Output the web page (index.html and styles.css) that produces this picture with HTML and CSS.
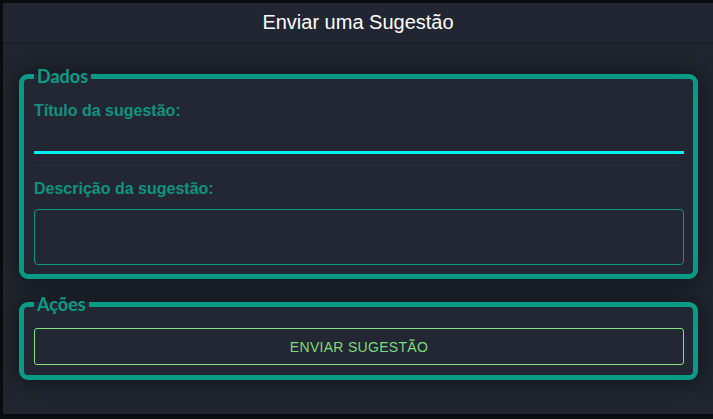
FILE: index.html
```html
<!DOCTYPE html>
<html lang="pt">
<head>
<meta charset="utf-8">
<title>Enviar uma Sugestão</title>
<link rel="stylesheet" href="styles.css">
</head>
<body>
<div class="dialog">
  <header class="dialog-title">Enviar uma Sugestão</header>
  <div class="dialog-body">
    <fieldset class="group">
      <legend>Dados</legend>
      <label class="field-label" for="titulo">Título da sugestão:</label>
      <div class="text-field">
        <input id="titulo" class="text-input" type="text">
      </div>
      <div class="field-details"></div>
      <label class="field-label second" for="descricao">Descrição da sugestão:</label>
      <textarea id="descricao" class="text-area"></textarea>
    </fieldset>
    <fieldset class="group actions">
      <legend>Ações</legend>
      <button class="send-btn" type="button">Enviar Sugestão</button>
    </fieldset>
  </div>
</div>
</body>
</html>
```
FILE: styles.css
```css
html, body {
  margin: 0;
  padding: 0;
  background: #0b0c0f;
  height: 100%;
  overflow: hidden;
}

.dialog {
  margin: 3px 0 0 3px;
  width: 710px;
  height: 411px;
  background: #20252f;
  border-top-left-radius: 3px;
  font-family: "Liberation Sans", Arial, sans-serif;
  display: flex;
  flex-direction: column;
}

.dialog-title {
  height: 39px;
  border-bottom: 2px solid #1a1e26;
  color: #ffffff;
  font-size: 20px;
  line-height: 39px;
  text-align: center;
  background: #212632;
}

.dialog-body {
  padding: 0 15px 0 16px;
  display: flex;
  flex-direction: column;
}

.group {
  margin: 22px 0 0 0;
  padding: 0 9px 9px 10px;
  border: 5px solid #079b85;
  border-radius: 9px;
  background: #222733;
  box-shadow: 0 0 22px 2px rgba(0, 0, 0, 0.45);
  min-width: 0;
}

.group legend {
  padding: 0 3px;
  font-family: Lato, "Open Sans", sans-serif;
  font-weight: 700;
  font-size: 18px;
  line-height: 20px;
  color: #0a9c85;
}

.field-label {
  display: block;
  margin-top: 16px;
  font-size: 16px;
  font-weight: 700;
  line-height: 18px;
  color: #10937f;
}

.field-label.second {
  margin-top: 14px;
}

.text-field {
  height: 31px;
  border-bottom: 3px solid #00f2f2;
}

.text-input {
  width: 100%;
  height: 100%;
  box-sizing: border-box;
  border: none;
  background: transparent;
  outline: none;
  color: #ffffff;
  font-size: 16px;
  padding: 0;
}

.field-details {
  height: 11px;
  border-bottom: 1px solid #2a2f3b;
}

.text-area {
  display: block;
  margin-top: 11px;
  width: 100%;
  height: 56px;
  box-sizing: border-box;
  border: 1px solid #0b9682;
  border-radius: 4px;
  background: transparent;
  resize: none;
  outline: none;
}

.actions {
  margin-top: 15px;
  padding-bottom: 10px;
}

.send-btn {
  display: block;
  margin-top: 14px;
  width: 100%;
  height: 37px;
  border: 1px solid #82e27c;
  border-radius: 3px;
  background: transparent;
  color: #7fdc7c;
  font-family: "Liberation Sans", Arial, sans-serif;
  font-size: 14px;
  letter-spacing: 0.3px;
  text-transform: uppercase;
  cursor: pointer;
}
```
